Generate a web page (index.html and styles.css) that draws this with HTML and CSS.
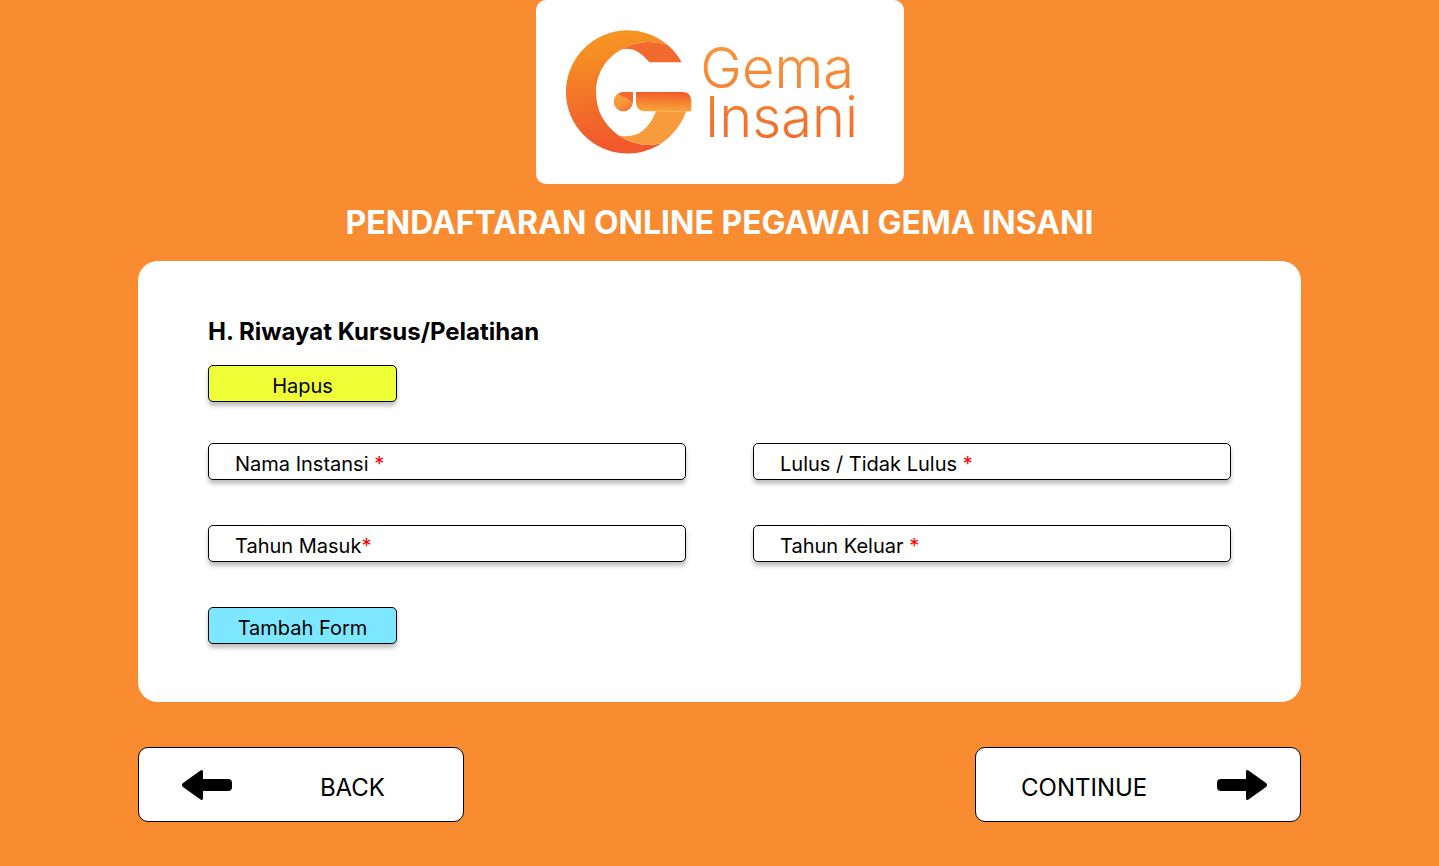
FILE: index.html
```html
<!DOCTYPE html>
<html lang="id">
<head>
<meta charset="utf-8">
<meta name="viewport" content="width=device-width, initial-scale=1">
<title>Pendaftaran Online Pegawai Gema Insani</title>
<link rel="stylesheet" href="styles.css">
</head>
<body class="page">
<header class="header">
  <div class="logo">
    <svg class="logo-art" viewBox="18 0 1104 552" role="img" aria-label="Gema Insani">
      <defs>
        <linearGradient id="ring" x1="0" y1="0" x2="0.15" y2="1"><stop offset="0" stop-color="#f79a22"/><stop offset="0.25" stop-color="#f68c24"/><stop offset="0.7" stop-color="#f26a2a"/><stop offset="1" stop-color="#f1582b"/></linearGradient>
        <linearGradient id="bar" x1="0.55" y1="0" x2="0.45" y2="1"><stop offset="0" stop-color="#f15a2b"/><stop offset="0.45" stop-color="#f47e30"/><stop offset="1" stop-color="#f9a63a"/></linearGradient>
        <linearGradient id="dot" x1="0.2" y1="0.2" x2="0.7" y2="1"><stop offset="0" stop-color="#f99d3a"/><stop offset="0.5" stop-color="#f8953a"/><stop offset="1" stop-color="#f37032"/></linearGradient>
        <linearGradient id="word" gradientUnits="userSpaceOnUse" x1="0" y1="140" x2="0" y2="411"><stop offset="0" stop-color="#f8963a"/><stop offset="1" stop-color="#f36c2b"/></linearGradient>
      </defs>
      <path fill="url(#ring)" d="M413 135A185 185 0 1 0 395 430Q325 447 265 406C225 375 198 335 198 276C198 225 225 175 273 149Q340 112 413 135Z"/>
      <path fill="#f26a2e" d="M273 149Q340 112 413 135Q439 157 455 187H358Q327 146 290 146Q280 146 273 149Z"/>
      <path fill="#f89b3c" d="M265 406Q325 447 395 430Q446 395 469 334H378Q348 410 287 409Q275 409 265 406Z"/>
      <path fill="url(#bar)" d="M318 276H456Q484 276 484 304V334H346Q318 334 318 306Z"/>
      <path fill="url(#dot)" d="M309 276H280A29 29 0 1 0 309 305Z"/>
      <path fill="#f26a2e" d="M264 281Q271 276 280 276H309V308Q290 292 264 281Z"/>
      <text class="logo-text" fill="url(#word)"><tspan x="511" y="264">Gema</tspan><tspan x="524" y="411">Insani</tspan></text>
    </svg>
  </div>
  <h1 class="title">PENDAFTARAN ONLINE PEGAWAI GEMA INSANI</h1>
</header>
<main>
  <form class="form">
    <section class="card">
      <h2 class="card-title">H. Riwayat Kursus/Pelatihan</h2>
      <button class="action action-remove" type="button">Hapus</button>
      <div class="fields">
        <div class="field"><label for="instansi">Nama Instansi <span class="required">*</span></label><input class="field-input" id="instansi" type="text"></div>
        <div class="field"><label for="lulus">Lulus / Tidak Lulus <span class="required">*</span></label><input class="field-input" id="lulus" type="text"></div>
        <div class="field"><label for="masuk">Tahun Masuk<span class="required">*</span></label><input class="field-input" id="masuk" type="text"></div>
        <div class="field"><label for="keluar">Tahun Keluar <span class="required">*</span></label><input class="field-input" id="keluar" type="text"></div>
      </div>
      <button class="action action-add" type="button">Tambah Form</button>
    </section>
    <nav class="steps">
      <button class="step step-back" type="button">
        <svg class="arrow" viewBox="0 0 50 32" aria-hidden="true"><path d="M1 14L18.500 1.500Q21 0 21 3V10H46Q50 10 50 14V18Q50 22 46 22H21V29Q21 32 18.500 30.500L1 18Q-1 16 1 14Z"/></svg>
        <span>BACK</span>
      </button>
      <button class="step step-next" type="button">
        <span>CONTINUE</span>
        <svg class="arrow" viewBox="0 0 50 32" aria-hidden="true"><path d="M49 14L31.500 1.500Q29 0 29 3V10H4Q0 10 0 14V18Q0 22 4 22H29V29Q29 32 31.500 30.500L49 18Q51 16 49 14Z"/></svg>
      </button>
    </nav>
  </form>
</main>
</body>
</html>
```
FILE: styles.css
```css
* {
  box-sizing: border-box;
}

.page {
  margin: 0;
  padding: 0 138px 44px;
  background: #f98b30;
  color: #000;
  font-family: Inter, "Liberation Sans", sans-serif;
}

.header {
  display: flex;
  flex-direction: column;
  align-items: center;
}

.logo {
  width: 368px;
  max-width: 100%;
  background: #fff;
  border-radius: 10px;
}

.logo-art {
  display: block;
  width: 100%;
}

.logo-text {
  font-family: Inter, sans-serif;
  font-size: 168px;
  font-weight: 300;
}

.title {
  margin: 19px 0 18px;
  color: #fff;
  font-size: 32px;
  font-weight: 700;
  line-height: 40px;
  text-align: center;
}

.card {
  padding: 56px 70px 58px;
  background: #fff;
  border-radius: 20px;
}

.card-title {
  margin: 0 0 18px;
  font-size: 24px;
  font-weight: 700;
  line-height: 30px;
}

.action,
.field {
  height: 37px;
  border: 1px solid #000;
  border-radius: 5px;
  box-shadow: 0 4px 4px rgba(0, 0, 0, 0.25);
  font-size: 20px;
  line-height: 24px;
}

.action {
  display: block;
  width: 189px;
  padding: 4px 0 0;
  color: #000;
  font-family: inherit;
}

.action-remove {
  background: #eeff38;
}

.action-add {
  background: #7de7ff;
}

.fields {
  display: grid;
  grid-template-columns: 1fr 1fr;
  gap: 45px 67px;
  margin: 41px 0 45px;
}

.field {
  display: flex;
  align-items: center;
  padding: 4px 8px 0 26px;
  background: #fff;
}

.required {
  color: #f00;
}

.field-input {
  flex: 1;
  min-width: 0;
  margin-left: 8px;
  padding: 0;
  border: 0;
  outline: 0;
  background: none;
  font: inherit;
}

.steps {
  display: flex;
  justify-content: space-between;
  margin-top: 45px;
}

.step {
  display: flex;
  align-items: center;
  justify-content: space-between;
  width: 326px;
  height: 75px;
  border: 1px solid #000;
  border-radius: 10px;
  background: #fff;
  color: #000;
  font-family: inherit;
  font-size: 24px;
  line-height: 30px;
}

.step span {
  padding-top: 6px;
}

.step-back {
  padding: 0 78px 0 43px;
}

.step-next {
  padding: 0 33px 0 45px;
}

.arrow {
  width: 50px;
  height: 32px;
}
```
